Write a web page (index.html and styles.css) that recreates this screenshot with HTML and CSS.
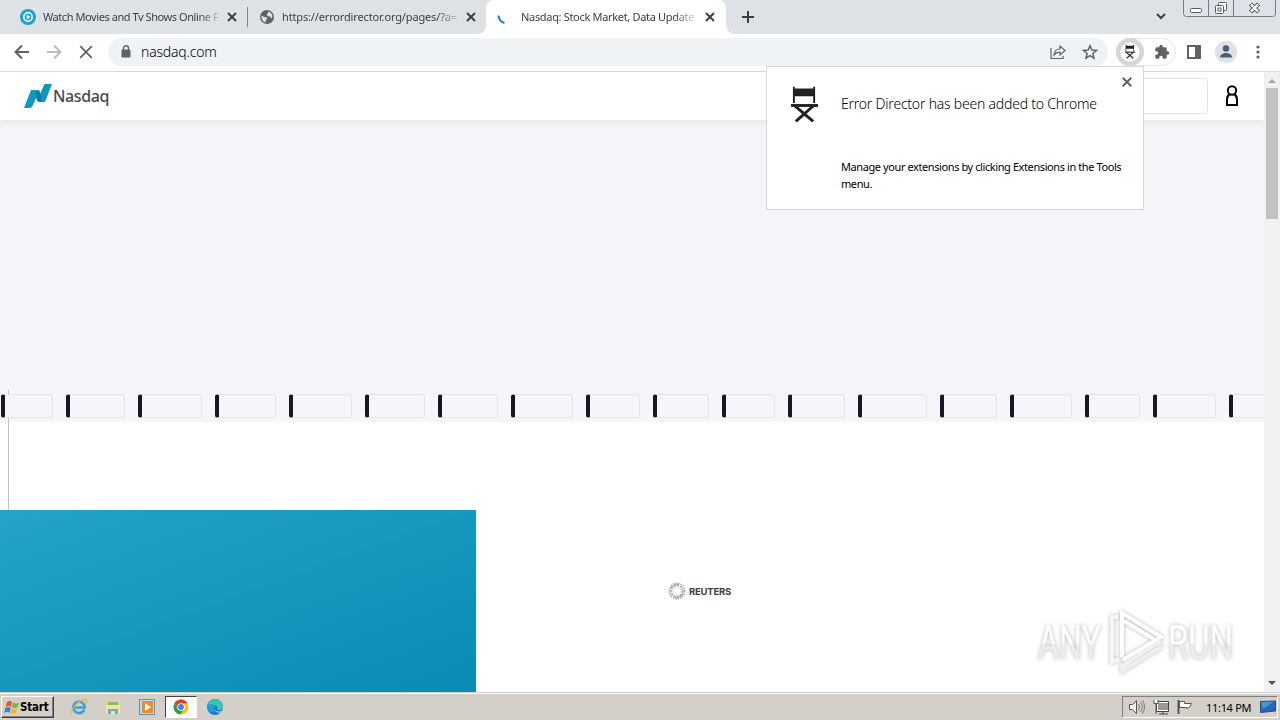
FILE: index.html
```html
<!DOCTYPE html>
<html lang="en">
<head>
    <meta charset="UTF-8">
    <title>Nasdaq: Stock Market, Data Updates</title>
    <link rel="stylesheet" href="styles.css">
</head>
<body>
    <div class="tabs">
        <div class="tab tab-first">
            <svg class="favicon" width="16" height="16" viewBox="0 0 16 16"><circle cx="8" cy="8" r="8" fill="#1ba0d8"/><circle cx="8" cy="8" r="4.2" fill="none" stroke="#fff" stroke-width="1.6"/><path d="M6.7 5.6v4.8L10.4 8z" fill="#fff"/></svg>
            <span class="tab-title t1">Watch Movies and Tv Shows Online F</span>
            <svg class="close" width="10" height="10" viewBox="0 0 10 10"><path d="M1 1l8 8M9 1L1 9"/></svg>
        </div>
        <div class="tab tab-second">
            <svg class="favicon" width="14" height="14" viewBox="0 0 14 14"><circle cx="7" cy="7" r="7" fill="#5f6368"/><path d="M1.5 5.8l3 1.2 2.3.4.4 1.6-1.5 1.2v2.2C3 12 1.300 9.500 1.500 5.800zM8 1.500c2.500.4 4.300 2.500 4.500 5l-1.200 2.300-1-2.200-2.600-.3-1-1.700L8.300 3z" fill="#dee1e6"/></svg>
            <span class="tab-title t2">https://errordirector.org/pages/?a=</span>
            <svg class="close" width="10" height="10" viewBox="0 0 10 10"><path d="M1 1l8 8M9 1L1 9"/></svg>
        </div>
        <div class="tab tab-active">
            <svg class="favicon" width="16" height="16" viewBox="0 0 16 16"><path d="M1.500 6.500C2 10.500 4 13 7.500 14" fill="none" stroke="#1a73e8" stroke-width="2"/></svg>
            <span class="tab-title t3">Nasdaq: Stock Market, Data Update</span>
            <svg class="close" width="10" height="10" viewBox="0 0 10 10"><path d="M1 1l8 8M9 1L1 9"/></svg>
        </div>
        <svg class="new-tab" width="12" height="12" viewBox="0 0 12 12"><path d="M6 0v12M0 6h12" stroke="#3c4043" stroke-width="2"/></svg>
        <svg class="tab-search" width="10" height="7" viewBox="0 0 10 7"><path d="M1 1l4 4 4-4" fill="none" stroke="#3c4043" stroke-width="2"/></svg>
        <svg class="win-buttons" width="93" height="17" viewBox="0 0 93 17">
            <path d="M.5 0v13.500q0 3 3 3h86q3 0 3-3V0M25.500 0v16M50.500 0v16" fill="none" stroke="#777c88"/>
            <g fill="#fff" stroke="#555b66"><rect x="7.500" y="8.500" width="11" height="4" rx="1"/><rect x="35.500" y="2.500" width="8" height="8" rx="1"/><rect x="32.500" y="5.500" width="8" height="8" rx="1"/><rect x="35" y="8" width="3" height="3"/></g>
            <path d="M67.500 4l8 8M75.500 4l-8 8" stroke="#555b66" stroke-width="4.400"/><path d="M68 4.500l7 7M75 4.500l-7 7" stroke="#fff" stroke-width="2.400"/>
        </svg>
    </div>

    <div class="toolbar">
        <svg class="nav" width="16" height="16" viewBox="0 0 16 16"><path d="M15 8H2M8 1.500L1.500 8 8 14.500" fill="none" stroke="#5f6368" stroke-width="2"/></svg>
        <svg class="nav" width="16" height="16" viewBox="0 0 16 16"><path d="M1 8h13M8 1.500L14.500 8 8 14.500" fill="none" stroke="#babcbe" stroke-width="2"/></svg>
        <svg class="nav" width="16" height="16" viewBox="0 0 16 16"><path d="M2.200 2.200l11.600 11.600M13.800 2.200L2.200 13.800" stroke="#5f6368" stroke-width="1.800"/></svg>
        <div class="omnibox">
            <svg width="10" height="13" viewBox="0 0 10 13"><rect x=".5" y="4.500" width="9" height="8" rx="1" fill="#5f6368"/><path d="M2.500 5V3.200a2.500 2.500 0 0 1 5 0V5" fill="none" stroke="#5f6368" stroke-width="1.400"/></svg>
            <span class="url">nasdaq.com</span>
            <svg class="share" width="16" height="16" viewBox="0 0 16 16" fill="none" stroke="#5f6368" stroke-width="1.200"><path d="M1 4v10.500h12V12"/><path d="M4 11c.4-4 2.500-6 6-6V2l5 4.500-5 4.500V8.200C7.500 8.200 5.500 9 4 11z"/></svg>
            <svg width="16" height="16" viewBox="0 0 16 16"><path d="M8 1.800l1.800 4.300 4.700.4-3.600 3 1.100 4.600L8 11.700l-4 2.400 1.100-4.600-3.600-3 4.700-.4z" fill="none" stroke="#5f6368" stroke-width="1.500"/></svg>
        </div>
        <div class="extensions">
            <div class="ext-active">
                <svg width="14" height="14" viewBox="0 0 28 38"><use href="#chair"/></svg>
            </div>
            <svg class="puzzle" width="16" height="16" viewBox="0 0 24 24"><path fill="#5f6368" d="M20.500 11H19V7a2 2 0 0 0-2-2h-4V3.500a2.500 2.500 0 0 0-5 0V5H4a2 2 0 0 0-2 2v3.800h1.500a2.700 2.700 0 0 1 0 5.400H2V20c0 1.100.9 2 2 2h3.800v-1.500a2.700 2.700 0 0 1 5.400 0V22H17a2 2 0 0 0 2-2v-4h1.500a2.500 2.500 0 0 0 0-5z"/></svg>
        </div>
        <svg class="panel" width="14" height="14" viewBox="0 0 14 14"><rect x="1" y="1" width="12" height="12" fill="none" stroke="#5f6368" stroke-width="2"/><path d="M8 0h6v14H8z" fill="#5f6368"/></svg>
        <svg class="avatar" width="22" height="22" viewBox="0 0 22 22"><circle cx="11" cy="11" r="11" fill="#dee1e6"/><circle cx="11" cy="7.500" r="3.200" fill="#4f5b7c"/><path d="M5 16.500c0-3 3-4.500 6-4.500s6 1.500 6 4.500z" fill="#4f5b7c"/></svg>
        <svg class="dots" width="4" height="14" viewBox="0 0 4 14" fill="#5f6368"><circle cx="2" cy="2" r="1.600"/><circle cx="2" cy="7" r="1.600"/><circle cx="2" cy="12" r="1.600"/></svg>
    </div>

    <div class="viewport">
        <div class="page">
            <header class="site-header">
                <svg width="28" height="24" viewBox="0 0 28 24"><path d="M7 6h6.500l1.500 1.500L9 21q-1.200 3-4 3H0z" fill="#0d98bf"/><path d="M20.500 0H28l-7 18h-5.500L13.500 16z" fill="#0d98bf"/><path d="M13.500 6q2.500 0 3 4l1 8h-2q-2.500 0-3-3l-1-5z" fill="#0a7ea8"/></svg>
                <span class="brand">Nasdaq</span>
                <div class="search"></div>
                <svg class="user" width="14" height="22" viewBox="0 0 14 22" fill="none" stroke="#000" stroke-width="2"><circle cx="7" cy="5.500" r="4.200"/><path d="M4.500 9.500C2.500 10.500 2 12 2 15v5h10v-5c0-3-.5-4.500-2.500-5.500"/></svg>
            </header>
            <div class="ad-space"></div>
            <div class="ticker">
                <div class="quote" style="width:52px"></div>
                <div class="quote" style="width:59px"></div>
                <div class="quote" style="width:64px"></div>
                <div class="quote" style="width:61px"></div>
                <div class="quote" style="width:63px"></div>
                <div class="quote" style="width:60px"></div>
                <div class="quote" style="width:60px"></div>
                <div class="quote" style="width:62px"></div>
                <div class="quote" style="width:54px"></div>
                <div class="quote" style="width:56px"></div>
                <div class="quote" style="width:53px"></div>
                <div class="quote" style="width:57px"></div>
                <div class="quote" style="width:69px"></div>
                <div class="quote" style="width:57px"></div>
                <div class="quote" style="width:62px"></div>
                <div class="quote" style="width:55px"></div>
                <div class="quote" style="width:63px"></div>
                <div class="quote" style="width:60px"></div>
            </div>
            <div class="rule"></div>
            <div class="hero">
                <div class="hero-color"></div>
                <div class="reuters">
                    <svg width="18" height="18" viewBox="0 0 18 18" fill="none" stroke="#999"><circle cx="9" cy="9" r="7.800" stroke-width="1.200" stroke-dasharray="1.500 1"/><circle cx="9" cy="9" r="5.800" stroke="#b5b5b5" stroke-width="2" stroke-dasharray="2.500 .8"/><circle cx="9" cy="9" r="3.800" stroke="#ccc" stroke-dasharray="1.500 1"/><path d="M3 6c2-3 5-4 8-3M15 12c-2 3-5 4-8 3"/></svg>
                    <span>REUTERS</span>
                </div>
            </div>
        </div>
        <div class="scrollbar">
            <svg width="16" height="16" viewBox="0 0 16 16"><path d="M4 11h8L8 7z" fill="#a3a3a3"/></svg>
            <div class="thumb"></div>
            <svg class="down" width="16" height="16" viewBox="0 0 16 16"><path d="M4 5h8L8 9z" fill="#505050"/></svg>
        </div>
    </div>

    <div class="taskbar">
        <div class="start">
            <svg width="16" height="16" viewBox="0 0 16 16"><path d="M3 3q3-2 5 0L7 8Q5 6 1.500 8z" fill="#e8562a"/><path d="M9 3.500q3 2 6 0L13.500 8q-3 2-5.500 0z" fill="#76b53c"/><path d="M1.300 9q3-2 5.500 0l-1.300 5Q3 12 0 14z" fill="#3f82cf"/><path d="M7.800 9.500q3 2 5.500 0L12 14q-3 2-5.500 0z" fill="#f3b920"/></svg>
            <span>Start</span>
        </div>
        <svg class="task ie" width="18" height="18" viewBox="0 0 18 18" fill="none"><path d="M14.300 11.500A5.700 5.700 0 1 1 14.700 9.500H4" stroke="#36a1dc" stroke-width="2.600"/><path d="M2 16C-1 13 8 3 14 1.500c4-.8 3 2 2 4" stroke="#e7b93c" stroke-width="1.300"/></svg>
        <svg class="task" width="18" height="18" viewBox="0 0 18 18"><path d="M2 2h6l1 2h6v11H2z" fill="#ecd27a"/><path d="M4 4h10v5H4z" fill="#7fbf75"/><path d="M2 7h14v9H2z" fill="#f5e39c"/><path d="M4 16v-5h10v5h-3v-3H7v3z" fill="#67acd8"/></svg>
        <svg class="task" width="18" height="18" viewBox="0 0 18 18"><rect x="1.500" y="1.500" width="15" height="15" fill="#b9d9f2" stroke="#5c94c8"/><rect x="4" y="3" width="11" height="12" rx="1" fill="#f28a1c"/><path d="M7 5v8l6-4z" fill="#fff"/></svg>
        <div class="task-active">
            <svg width="16" height="16" viewBox="0 0 16 16"><circle cx="8" cy="8" r="7.500" fill="#fbc116"/><path d="M1.500 4.250A7.500 7.500 0 0 1 14.500 4.250L8 4.500 5 10z" fill="#e33b2e"/><path d="M1.500 4.250A7.500 7.500 0 0 0 7.500 15.500L11 10H5z" fill="#2da04e"/><circle cx="8" cy="8" r="3.800" fill="#fff"/><circle cx="8" cy="8" r="2.900" fill="#3f7de8"/></svg>
        </div>
        <svg class="task edge" width="18" height="18" viewBox="0 0 18 18"><circle cx="9" cy="9" r="8" fill="#1478c8"/><path d="M1 9a8 8 0 0 1 16 0c0 3-4 4-6 2.500 1-2 0-4.500-3-4.500-3 0-5 0-7 2z" fill="#36c6b0"/><path d="M1 9c0-4 8-4 9 0-2 0-3 2-1 5-3 1-8-1-8-5z" fill="#1b9de2"/><path d="M10 9c-2 1-1 4 2 4.500 2 .3 3-.5 4-1-1 1-1 1.500-2 2.500-4 0-7-4-4-6z" fill="#d6d2c9"/></svg>
        <div class="tray">
            <svg width="18" height="18" viewBox="0 0 18 18"><path d="M1.500 6.500h3l4-4v13l-4-4h-3z" fill="#fff" stroke="#555"/><path d="M10.500 6q2 3 0 6M12.500 4q3.500 5 0 10M14.500 2.500q4 6.500 0 13" fill="none" stroke="#777"/></svg>
            <svg width="18" height="18" viewBox="0 0 18 18"><rect x="5.500" y="4.500" width="11" height="8" fill="#999" stroke="#fff"/><path d="M4.500 3.500h12v10h-12zM7 16h9M11 14v2" fill="none" stroke="#444"/><path d="M2 2v3.500h4V2M4 5.500V16" stroke="#555" fill="#fff"/></svg>
            <svg width="18" height="18" viewBox="0 0 18 18"><path d="M2.500 2v14" stroke="#555" stroke-width="2"/><path d="M3.500 3.500h5v2h7l-2 4-3 1v-1h-7z" fill="#fff" stroke="#555"/></svg>
            <span class="clock">11:14 PM</span>
            <svg class="desktop" width="16" height="14" viewBox="0 0 16 14"><path d="M.5 1.500l15-.5v10l-15 1.500z" fill="#2469b8" stroke="#1e4f86"/><path d="M1 2l13-.4L3 9z" fill="#4c93d8"/></svg>
        </div>
    </div>

    <!-- extension bubble -->
    <div class="bubble">
        <svg class="bubble-icon" width="27" height="38" viewBox="0 0 28 38">
            <g id="chair" fill="#222"><path d="M2 0h2v2h19V0h2v17h-2v-7H4v7H2z"/><path d="M0 18h28v3H0z"/><path d="M4 20L23 36M23 20L5 36" stroke="#222" stroke-width="3"/></g>
        </svg>
        <div class="bubble-text">
            <div class="bubble-title">Error Director has been added to Chrome</div>
            <p>Manage your extensions by clicking Extensions in the Tools menu.</p>
        </div>
        <svg class="bubble-close" width="10" height="10" viewBox="0 0 10 10"><path d="M.7.7l8.600 8.600M9.300.7L.7 9.300" stroke="#5f6368" stroke-width="2"/></svg>
    </div>

    <!-- watermark -->
    <svg class="watermark" width="216" height="72" viewBox="0 0 216 72">
        <defs>
            <linearGradient id="fade" x1="0" y1="0" x2="0" y2="1"><stop offset=".5" stop-color="#fff"/><stop offset=".55" stop-color="#ededed"/></linearGradient>
        </defs>
        <g fill="url(#fade)">
            <text x="6" y="54" font-size="49" textLength="63" lengthAdjust="spacingAndGlyphs">ANY</text>
            <text x="136" y="54" font-size="49" textLength="65" lengthAdjust="spacingAndGlyphs">RUN</text>
        </g>
        <g fill="none" stroke-width="4"><path d="M86 12h-6v45l7-3" stroke="#f6f6f6"/><path d="M90 52V8l39 24-38 23" stroke="#fff"/><path d="M129 36L90 61v5l40-25" stroke="#f0f0f0"/><path d="M92 16l30 18" stroke="#fff"/></g>
    </svg>
</body>
</html>
```
FILE: styles.css
```css
body {
    width: 1280px;
    height: 720px;
    margin: 0;
    overflow: hidden;
    position: relative;
    display: flex;
    flex-direction: column;
    font-family: "Noto Sans", sans-serif;
    background: #fff;
}
svg {
    display: block;
    flex-shrink: 0;
}

/* tab strip */
.tabs {
    height: 34px;
    flex-shrink: 0;
    background: #dee1e6;
    display: flex;
}
.tab {
    height: 34px;
    display: flex;
    align-items: center;
    box-sizing: border-box;
}
.tab-first {
    width: 247px;
    padding-left: 20px;
}
.tab-second {
    width: 239px;
    padding-left: 13px;
    background: linear-gradient(#80868b, #80868b) 0 7px / 1px 20px no-repeat;
}
.tab-active {
    width: 240px;
    padding-left: 11px;
    background: #fff;
    border-radius: 8px 8px 0 0;
    position: relative;
}
.tab-active::before,
.tab-active::after {
    content: "";
    position: absolute;
    bottom: 0;
    width: 8px;
    height: 8px;
}
.tab-active::before {
    left: -8px;
    background: radial-gradient(circle at 0 0, #dee1e6 7.5px, #fff 8px);
}
.tab-active::after {
    right: -8px;
    background: radial-gradient(circle at 100% 0, #dee1e6 7.5px, #fff 8px);
}
.tab-title {
    margin: -1px 8px 0;
    font-size: 11px;
    color: #3c4043;
    white-space: nowrap;
    -webkit-mask-image: linear-gradient(to right, #000 88%, transparent 102%);
    mask-image: linear-gradient(to right, #000 88%, transparent 102%);
}
.t1 {
    width: 177px;
    margin: -1px 7px 0;
    letter-spacing: -0.43px;
}
.t2 {
    width: 176px;
    letter-spacing: -0.15px;
}
.t3 {
    width: 174px;
    margin-right: 10px;
    letter-spacing: -0.32px;
}
.close {
    stroke: #3c4043;
    stroke-width: 2;
}
.new-tab {
    margin: 11px 0 0 16px;
}
.tab-search {
    margin: 13px 0 0 auto;
}
.win-buttons {
    margin: 0 4px 0 17px;
}

/* toolbar */
.toolbar {
    height: 38px;
    flex-shrink: 0;
    box-sizing: border-box;
    padding: 0 20px 2px 14px;
    border-bottom: 1px solid #d5d7da;
    display: flex;
    align-items: center;
}
.nav {
    margin-right: 16px;
}
.omnibox {
    width: 1000px;
    height: 28px;
    margin-left: -2px;
    padding: 0 10px 0 13px;
    box-sizing: border-box;
    border-radius: 14px;
    background: #f0f3f5;
    display: flex;
    align-items: center;
}
.url {
    margin: 0 auto 0 10px;
    font-size: 14px;
    font-weight: 300;
    letter-spacing: -0.2px;
    color: #000;
}
.share {
    margin-right: 16px;
}
.extensions {
    width: 60px;
    height: 28px;
    margin-left: 8px;
    box-sizing: border-box;
    border: 1px solid #e6e7e9;
    border-radius: 14px;
    display: flex;
    align-items: center;
}
.ext-active {
    width: 28px;
    height: 28px;
    margin-left: -1px;
    border-radius: 50%;
    background: radial-gradient(circle, #fff 9px, #d5d6d8 10px);
    display: flex;
    align-items: center;
    justify-content: center;
}
.puzzle {
    margin-left: 10px;
}
.panel {
    margin-left: 11px;
}
.avatar {
    margin-left: 14px;
}
.dots {
    margin-left: 19px;
}

/* web page */
.viewport {
    height: 620px;
    display: flex;
}
.page {
    width: 1264px;
    overflow: hidden;
    display: flex;
    flex-direction: column;
}
.site-header {
    height: 48px;
    flex-shrink: 0;
    padding: 0 25px 0 24px;
    display: flex;
    align-items: center;
    background: #fff;
    box-shadow: 0 2px 8px rgba(0, 0, 0, 0.08);
    position: relative;
}
.brand {
    margin-left: 1px;
    font-size: 16px;
    font-weight: 500;
    letter-spacing: -0.4px;
    color: #48494b;
}
.search {
    width: 300px;
    height: 34px;
    margin-left: auto;
    border: 1px solid #e3e3e6;
    border-radius: 3px;
}
.user {
    margin-left: 17px;
}
.ad-space {
    height: 270px;
    flex-shrink: 0;
    background: #f5f5fa;
}
.ticker {
    height: 32px;
    flex-shrink: 0;
    box-sizing: border-box;
    padding: 4px 0 0 1px;
    background: linear-gradient(#c4c4c8, #c4c4c8) 8px 0 / 1px 32px no-repeat #f5f5fa;
    display: flex;
    gap: 13px;
}
.quote {
    height: 24px;
    flex-shrink: 0;
    box-sizing: border-box;
    border: 1px solid #e4e4ea;
    border-left: 4px solid #171726;
    border-radius: 3px;
    background: #f5f5fa;
}
.rule {
    height: 88px;
    flex-shrink: 0;
    margin-left: 8px;
    border-left: 1px solid #c4c4c8;
}
.hero {
    height: 182px;
    display: flex;
}
.hero-color {
    width: 476px;
    background: linear-gradient(160deg, #25a3c8, #078cb4);
}
.reuters {
    height: 18px;
    margin: 72px 0 0 192px;
    display: flex;
    align-items: center;
    gap: 3px;
    font-family: Inter, sans-serif;
    font-size: 9.5px;
    font-weight: 700;
    letter-spacing: -0.2px;
    color: #404040;
}
.scrollbar {
    width: 16px;
    background: #f1f1f1;
    display: flex;
    flex-direction: column;
}
.thumb {
    width: 12px;
    height: 131px;
    margin: 0 auto;
    background: #c1c1c1;
}
.down {
    margin-top: auto;
}

/* taskbar */
.taskbar {
    height: 28px;
    flex-shrink: 0;
    box-sizing: border-box;
    border-top: 1px solid #d4d0c8;
    background: #d4d0c8;
    box-shadow: inset 0 1px #fff;
    padding-top: 1px;
    display: flex;
    align-items: center;
}
.start {
    width: 53px;
    height: 22px;
    box-sizing: border-box;
    margin-left: 1px;
    padding-left: 2px;
    border: 1px solid;
    border-color: #fff #404040 #404040 #fff;
    box-shadow: inset -1px -1px #808080;
    display: flex;
    align-items: center;
    font-family: "DejaVu Sans Condensed", "DejaVu Sans", sans-serif;
    font-size: 11.5px;
    font-weight: 700;
    letter-spacing: -0.2px;
}
.ie {
    margin-left: 16px;
}
.task + .task {
    margin-left: 16px;
}
.task-active {
    width: 32px;
    height: 22px;
    box-sizing: border-box;
    margin-left: 9px;
    border: 1px solid;
    border-color: #404040 #fff #fff #404040;
    background: #fff;
    display: flex;
    align-items: center;
    justify-content: center;
}
.edge {
    margin-left: 9px;
}
.tray {
    width: 156px;
    height: 22px;
    box-sizing: border-box;
    margin: 0 2px 0 auto;
    padding-left: 5px;
    border: 1px solid;
    border-color: #808080 #fff #fff #808080;
    display: flex;
    align-items: center;
    gap: 6px;
}
.clock {
    margin-left: 6px;
    font-size: 11px;
    letter-spacing: -0.3px;
    white-space: nowrap;
}
.desktop {
    margin: 0 1px 0 auto;
}

/* bubble hanging from the toolbar */
.bubble {
    position: absolute;
    left: 766px;
    top: 66px;
    width: 378px;
    height: 144px;
    box-sizing: border-box;
    padding: 19px 14px 0 24px;
    border: 1px solid #d5d6d9;
    background: #fff;
    display: flex;
}
.bubble-text {
    margin-left: 23px;
}
.bubble-title {
    margin-top: 8px;
    font-size: 14px;
    font-weight: 300;
    letter-spacing: -0.22px;
    line-height: 20px;
    color: #000;
    white-space: nowrap;
}
.bubble p {
    width: 290px;
    margin: 44px 0 0;
    font-size: 11px;
    letter-spacing: -0.41px;
    line-height: 17px;
    color: #000;
}
.bubble-close {
    position: absolute;
    right: 11px;
    top: 10px;
}

.watermark {
    position: absolute;
    left: 1032px;
    top: 605px;
    font-family: Roboto, sans-serif;
    font-weight: 400;
    filter: drop-shadow(0 0 2px rgba(0, 0, 0, 0.28));
}
```
